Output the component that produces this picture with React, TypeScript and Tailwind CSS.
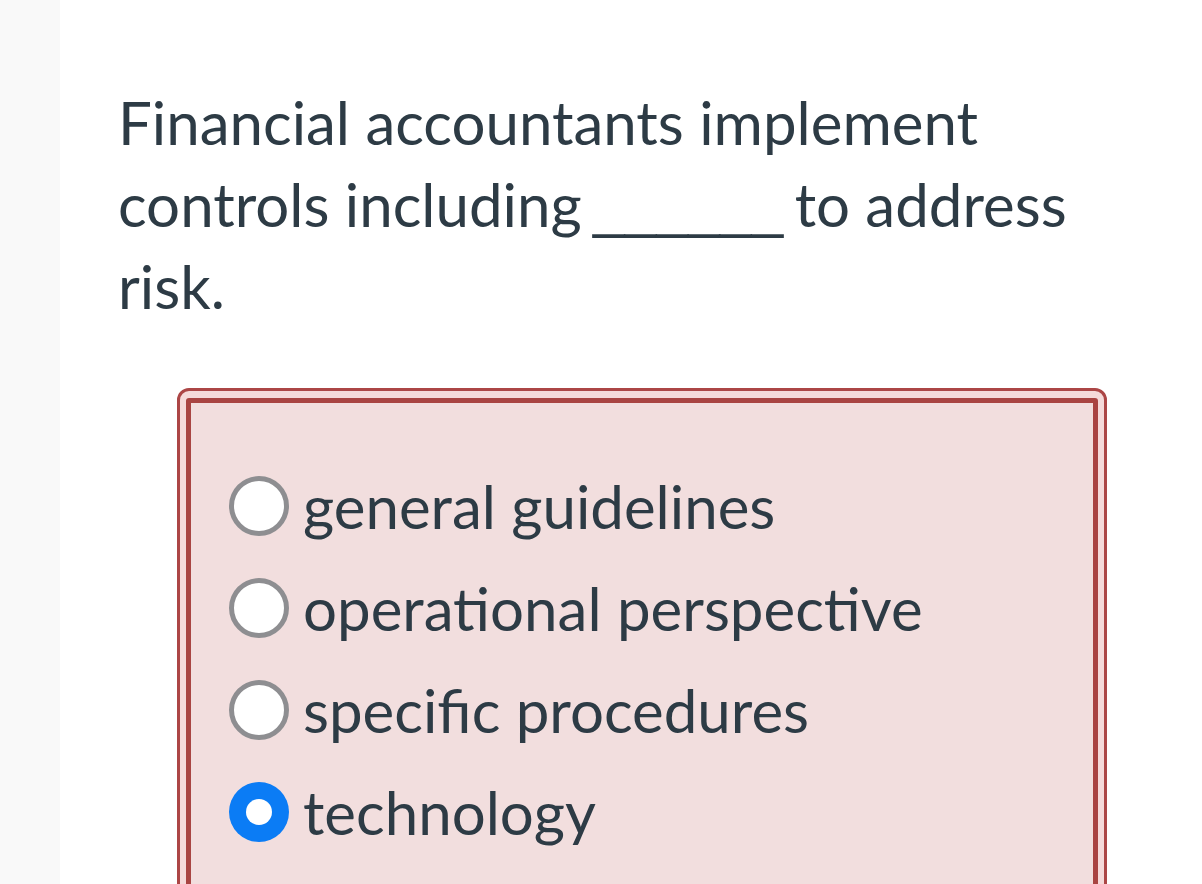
import React from "react";

const options = [
  { label: "general guidelines", selected: false },
  { label: "operational perspective", selected: false },
  { label: "specific procedures", selected: false },
  { label: "technology", selected: true },
];

function Radio({ selected }: { selected: boolean }) {
  if (selected) {
    return (
      <span className="flex h-[60px] w-[60px] shrink-0 items-center justify-center rounded-full bg-[#0b7cf5]">
        <span className="h-[26px] w-[26px] rounded-full bg-white" />
      </span>
    );
  }
  return <span className="h-[60px] w-[60px] shrink-0 rounded-full border-[5px] border-[#8e8e91] bg-white" />;
}

export default function App() {
  return (
    <div className="flex h-[884px] w-[1202px] overflow-hidden bg-white text-[#2d3b45]" style={{ fontFamily: "Lato, 'Open Sans', sans-serif" }}>
      <div className="w-[60px] shrink-0 bg-[#f9f9f9]" />
      <main className="flex-1 pl-[58px] pt-[81px]">
        <p className="w-[1000px] text-[60px] leading-[82px]">
          Financial accountants implement controls including{" "}
          <span className="-mx-[4px] text-[57px] leading-none" style={{ fontFamily: "'Liberation Sans', Arial, sans-serif" }}>______</span>{" "}
          to address risk.
        </p>
        <div className="ml-[59px] mt-[61px] w-[930px] rounded-[12px] border-[3px] border-[#ac4646] bg-[#f5dada] px-[6px] pt-[7px]">
          <div className="h-[600px] rounded-[3px] border-[5px] border-[#a94442] bg-[#f2dede] pl-[38px] pt-[52px]">
            {options.map((o) => (
              <div key={o.label} className="flex h-[102px] items-center gap-[14px]">
                <Radio selected={o.selected} />
                <span className="text-[60px] leading-[102px]">{o.label}</span>
              </div>
            ))}
          </div>
        </div>
      </main>
    </div>
  );
}
